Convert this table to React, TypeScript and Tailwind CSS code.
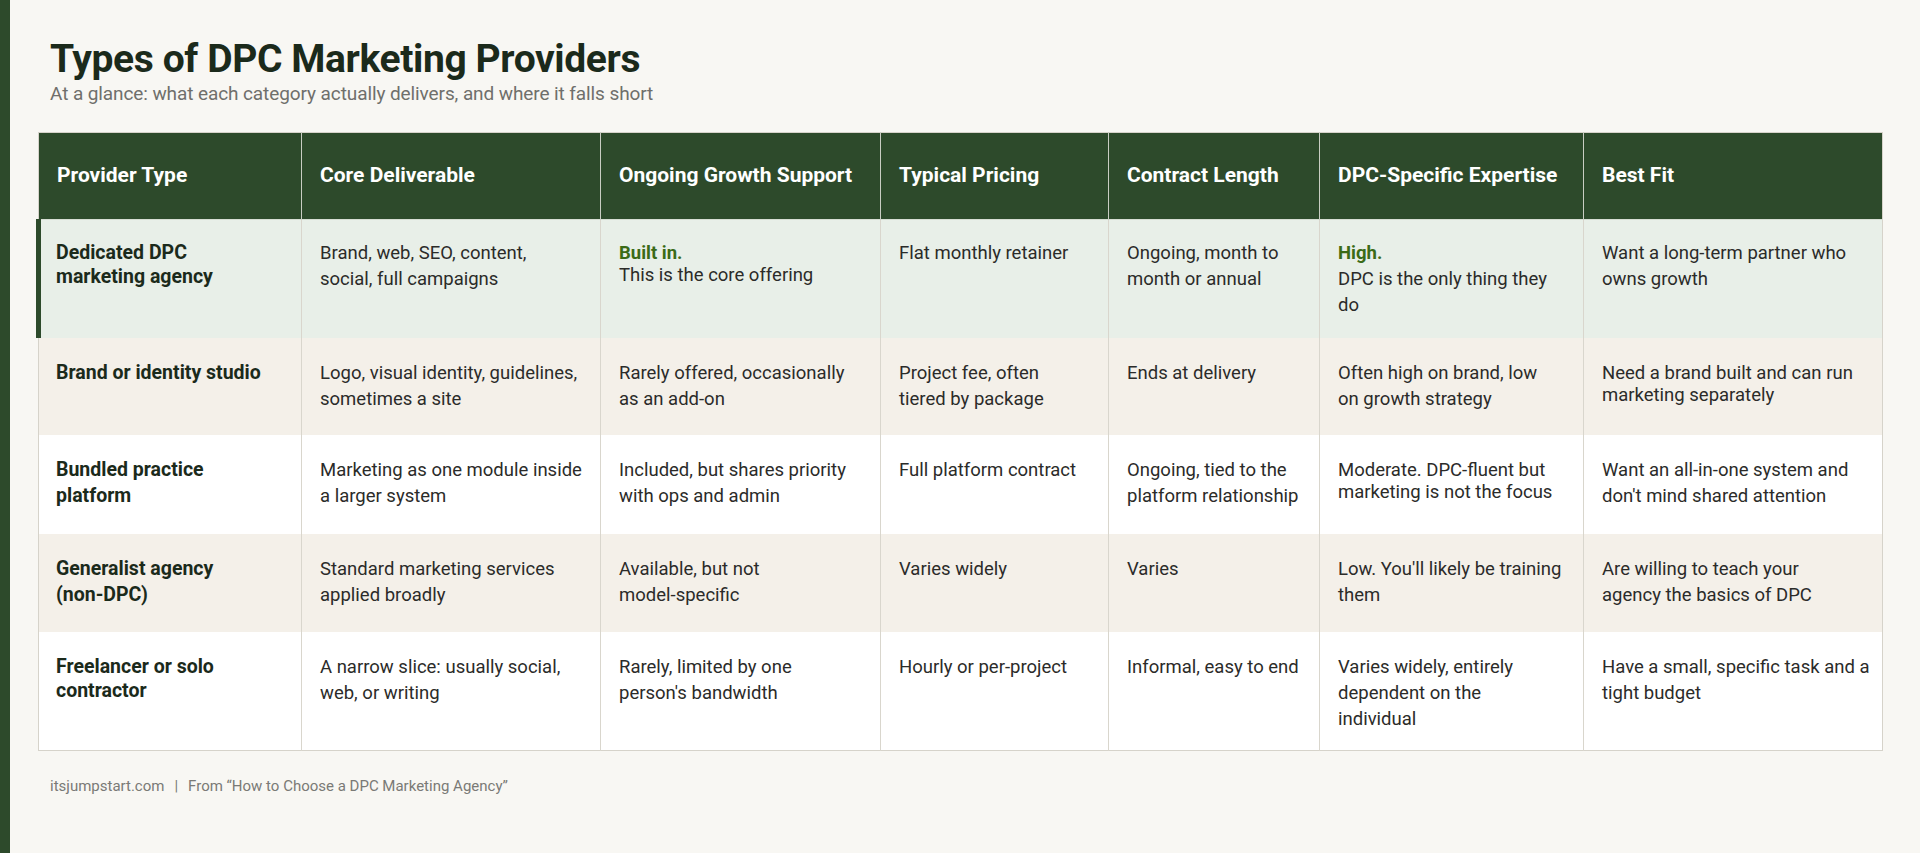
import React from 'react';

type Cell = {
  lines: string[];
  accent?: string;
  tight?: boolean;
};

type Row = {
  provider: string[];
  tightProvider?: boolean;
  cells: Cell[];
  tone: 'highlight' | 'beige' | 'white';
  height: string;
};

const headers = [
  'Provider Type',
  'Core Deliverable',
  'Ongoing Growth Support',
  'Typical Pricing',
  'Contract Length',
  'DPC-Specific Expertise',
  'Best Fit',
];

const colWidths = ['w-[263px]', 'w-[299px]', 'w-[280px]', 'w-[228px]', 'w-[211px]', 'w-[264px]', 'w-[299px]'];

const rows: Row[] = [
  {
    provider: ['Dedicated DPC', 'marketing agency'],
    tightProvider: true,
    tone: 'highlight',
    height: 'h-[118px]',
    cells: [
      { lines: ['Brand, web, SEO, content,', 'social, full campaigns'] },
      { accent: 'Built in.', lines: ['This is the core offering'], tight: true },
      { lines: ['Flat monthly retainer'] },
      { lines: ['Ongoing, month to', 'month or annual'] },
      { accent: 'High.', lines: ['DPC is the only thing they', 'do'] },
      { lines: ['Want a long-term partner who', 'owns growth'] },
    ],
  },
  {
    provider: ['Brand or identity studio'],
    tone: 'beige',
    height: 'h-[97px]',
    cells: [
      { lines: ['Logo, visual identity, guidelines,', 'sometimes a site'] },
      { lines: ['Rarely offered, occasionally', 'as an add-on'] },
      { lines: ['Project fee, often', 'tiered by package'] },
      { lines: ['Ends at delivery'] },
      { lines: ['Often high on brand, low', 'on growth strategy'] },
      { lines: ['Need a brand built and can run', 'marketing separately'], tight: true },
    ],
  },
  {
    provider: ['Bundled practice', 'platform'],
    tone: 'white',
    height: 'h-[99px]',
    cells: [
      { lines: ['Marketing as one module inside', 'a larger system'] },
      { lines: ['Included, but shares priority', 'with ops and admin'] },
      { lines: ['Full platform contract'] },
      { lines: ['Ongoing, tied to the', 'platform relationship'] },
      { lines: ['Moderate. DPC-fluent but', 'marketing is not the focus'], tight: true },
      { lines: ['Want an all-in-one system and', "don't mind shared attention"] },
    ],
  },
  {
    provider: ['Generalist agency', '(non-DPC)'],
    tone: 'beige',
    height: 'h-[98px]',
    cells: [
      { lines: ['Standard marketing services', 'applied broadly'] },
      { lines: ['Available, but not', 'model-specific'] },
      { lines: ['Varies widely'] },
      { lines: ['Varies'] },
      { lines: ["Low. You'll likely be training", 'them'] },
      { lines: ['Are willing to teach your', 'agency the basics of DPC'] },
    ],
  },
  {
    provider: ['Freelancer or solo', 'contractor'],
    tightProvider: true,
    tone: 'white',
    height: 'h-[119px]',
    cells: [
      { lines: ['A narrow slice: usually social,', 'web, or writing'] },
      { lines: ['Rarely, limited by one', "person's bandwidth"] },
      { lines: ['Hourly or per-project'] },
      { lines: ['Informal, easy to end'] },
      { lines: ['Varies widely, entirely', 'dependent on the', 'individual'] },
      { lines: ['Have a small, specific task and a', 'tight budget'] },
    ],
  },
];

const toneBg = {
  highlight: 'bg-[#e8efe8]',
  beige: 'bg-[#f4f0e9]',
  white: 'bg-white',
};

export default function App() {
  return (
    <div className="flex min-h-screen bg-[#f8f7f3] font-['Roboto',sans-serif]">
      {/* left brand stripe */}
      <div className="w-[10px] shrink-0 bg-[#2d4a2b]" />

      <main className="flex-1 pt-[37px] pl-[26px] pr-[40px]">
        <header className="pl-[14px]">
          <h1 className="text-[39px] leading-[44px] font-bold tracking-[-0.01em] text-[#1b2a1b]">
            Types of DPC Marketing Providers
          </h1>
          <p className="mt-[1px] text-[19px] leading-[24px] tracking-[-0.005em] text-[#6f6f6b]">
            At a glance: what each category actually delivers, and where it falls short
          </p>
        </header>

        <table className="mt-[26px] w-[1844px] table-fixed border-collapse border border-[#d6d3ca]">
          <colgroup>
            {colWidths.map((w, i) => (
              <col key={i} className={w} />
            ))}
          </colgroup>
          <thead>
            <tr className="h-[87px] bg-[#2d4a2b]">
              {headers.map((h, i) => (
                <th
                  key={h}
                  className={`px-[18px] text-left align-middle text-[21px] font-bold text-white ${
                    i > 0 ? 'border-l border-[#c9cdc3]' : ''
                  }`}
                >
                  {h}
                </th>
              ))}
            </tr>
          </thead>
          <tbody className="border-t border-[#d6ddd3]">
            {rows.map((row, ri) => {
              const pad = ri === 0 ? 'pt-[20px] pb-[18px]' : 'pt-[22px] pb-[18px]';
              return (
                <tr key={ri} className={`${row.height} ${toneBg[row.tone]}`}>
                  <td
                    className={`${pad} pr-[18px] align-top ${
                      row.tone === 'highlight' ? 'border-l-[5px] border-l-[#2d4a2b] pl-[15px]' : 'pl-[17px]'
                    }`}
                  >
                    <div className={row.tightProvider ? 'pt-[1px]' : ''}>
                      {row.provider.map((l) => (
                        <div
                          key={l}
                          className={`whitespace-nowrap text-[19.5px] font-bold text-[#1b2a1b] ${
                            row.tightProvider ? 'leading-[24px]' : 'leading-[26px]'
                          }`}
                        >
                          {l}
                        </div>
                      ))}
                    </div>
                  </td>
                  {row.cells.map((c, ci) => (
                    <td
                      key={ci}
                      className={`${pad} border-l border-[#d9d6cd] px-[18px] align-top text-[18.5px] text-[#2b2b29]`}
                    >
                      <div className={c.tight ? 'pt-[2px]' : ''}>
                        {c.accent && (
                          <div
                            className={`font-bold text-[#3b6b17] ${
                              c.tight ? 'leading-[22px]' : 'leading-[26px]'
                            }`}
                          >
                            {c.accent}
                          </div>
                        )}
                        {c.lines.map((l) => (
                          <div
                            key={l}
                            className={`whitespace-nowrap ${c.tight ? 'leading-[22px]' : 'leading-[26px]'}`}
                          >
                            {l}
                          </div>
                        ))}
                      </div>
                    </td>
                  ))}
                </tr>
              );
            })}
          </tbody>
        </table>

        <footer className="mt-[25px] pl-[14px] text-[15px] leading-[20px] text-[#7a7a76]">
          itsjumpstart.com<span className="mx-[10px]">|</span>From “How to Choose a DPC Marketing Agency”
        </footer>
      </main>
    </div>
  );
}
